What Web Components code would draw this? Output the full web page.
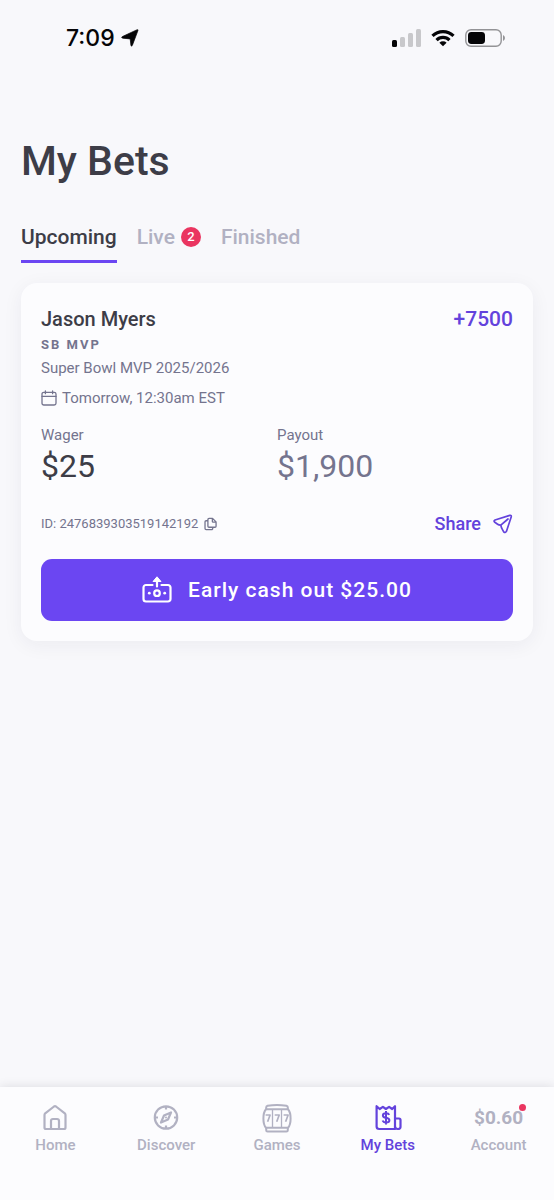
<!DOCTYPE html>
<html lang="en">
<head>
<meta charset="utf-8">
<meta name="viewport" content="width=device-width, initial-scale=1">
<title>My Bets</title>
<style>
  :root {
    --bg: #f8f8fb;
    --surface: #fcfcfe;
    --ink: #3d3d47;
    --muted: #74748e;
    --faint: #b1b1c2;
    --accent: #6b46f2;
    --accent-text: #6342dc;
    --alert: #ea3560;
    --gutter: 21px;
  }
  body {
    margin: 0;
    background: var(--bg);
    color: var(--ink);
    font-family: Roboto, "Liberation Sans", sans-serif;
  }
</style>
</head>
<body>
<bets-app></bets-app>

<script>
  const define = (name, markup, setup) => {
    const template = document.createElement('template');
    template.innerHTML = markup;
    customElements.define(name, class extends HTMLElement {
      constructor() {
        super();
        this.attachShadow({ mode: 'open' }).append(template.content.cloneNode(true));
      }
      connectedCallback() {
        if (setup) setup(this, this.shadowRoot);
      }
    });
  };

  const ICONS = {
    location: ['0 0 20 20', '<path d="M18.8 1.8 12.6 18.2Q11.600 20 11 18L10.200 11 2 10.200Q-.4 9.500 1.600 8.400L17.400 1Q19.400 .2 18.800 1.800Z" fill="currentColor" stroke="currentColor" stroke-width=".8" stroke-linejoin="round"/>'],
    signal: ['0 0 29 18', '<g fill="#c8c8cb"><rect x="8" y="8" width="5" height="10" rx="1.5"/><rect x="16" y="4" width="5" height="14" rx="1.5"/><rect x="24" y="0" width="5" height="18" rx="1.5"/></g><rect y="11" width="5" height="7" rx="1.5" fill="currentColor"/>'],
    wifi: ['0 0 26 18', '<g fill="none" stroke="currentColor" stroke-width="3.4"><path d="M1.6 6.8a16.2 16.2 0 0 1 22.8 0"/><path d="M6 11.3a9.8 9.8 0 0 1 14 0"/></g><path d="M13 18 9.1 14.2a5.5 5.5 0 0 1 7.8 0Z" fill="currentColor"/>'],
    battery: ['0 0 41 18', '<rect x=".8" y=".8" width="35.4" height="16.4" rx="5.2" fill="none" stroke="#939396" stroke-width="1.4"/><rect x="3" y="3" width="17" height="12" rx="3.4" fill="currentColor"/><path d="M38 6q2 .8 2 3t-2 3Z" fill="#939396"/>'],
    calendar: ['0 0 16 16', '<g fill="none" stroke="currentColor" stroke-width="1.3" stroke-linecap="round" stroke-linejoin="round"><rect x="1" y="2.3" width="14" height="12.7" rx="1.8"/><path d="M1 6.4h14M4.4.9v2.8M11.6.9v2.8"/></g>'],
    copy: ['0 0 14 14', '<g fill="none" stroke="currentColor" stroke-width="1.4" stroke-linejoin="round" stroke-linecap="round"><path d="M5.4.9h3.8L13 4.7v4.600a1.200 1.200 0 0 1-1.200 1.200H5.400A1.200 1.200 0 0 1 4.200 9.300V2.100A1.200 1.200 0 0 1 5.400.9ZM9 1v3.200a.8.8 0 0 0 .8.8H13M4 3.500H2.300A1.200 1.200 0 0 0 1.100 4.700v7.200a1.200 1.200 0 0 0 1.200 1.200h5.900a1.200 1.200 0 0 0 1.200-1.200v-1.200"/></g>'],
    share: ['0 0 20 20', '<g fill="none" stroke="currentColor" stroke-width="1.700" stroke-linejoin="round" stroke-linecap="round"><path d="M16.800 1.400 2 6Q.4 6.800 1.500 8L4.600 10.200Q5.600 10.900 7.800 11.200 8.400 13.800 9.200 15.200L10.700 17.800Q12.200 19.200 13.400 17.400L18.200 3Q18.600 1 16.800 1.400ZM7.800 11.200 15 5"/></g>'],
    cashout: ['0 0 30 28', '<g fill="none" stroke="currentColor" stroke-width="2.200" stroke-linejoin="round" stroke-linecap="round"><path d="M10.500 9H4A2.500 2.500 0 0 0 1.500 11.500V23A2.500 2.500 0 0 0 4 25.500h22a2.500 2.500 0 0 0 2.500-2.500V11.500A2.500 2.500 0 0 0 26 9h-6.500M15 10.500V3"/><circle cx="15" cy="17.200" r="2.800"/></g><path d="M15 .8 19 5.500h-8Z" fill="currentColor" stroke="currentColor" stroke-linejoin="round"/><circle cx="7.300" cy="17.200" r="1.400" fill="currentColor"/><circle cx="22.700" cy="17.200" r="1.400" fill="currentColor"/>'],
    home: ['0 0 30 30', '<g fill="none" stroke="currentColor" stroke-width="2.200" stroke-linejoin="round"><path d="M4.500 12Q4.500 11 5.200 10.300L14 3.500Q15 2.800 16 3.500L24.800 10.300Q25.500 11 25.500 12V24.500Q25.500 26 24 26H6Q4.500 26 4.500 24.500Z"/><path d="M11 26V18Q11 16 13 16H17Q19 16 19 18V26"/></g>'],
    discover: ['0 0 30 30', '<g fill="none" stroke="currentColor" stroke-width="2.200" stroke-linejoin="round"><circle cx="15" cy="14.500" r="11.200"/><path d="m20 9.500-3 7-7 3 3-7Z"/><path d="M15 3.500v3M15 22.500v3M4 14.500h3M23 14.500h3"/></g><circle cx="15" cy="14.500" r="1" fill="currentColor"/>'],
    games: ['0 0 30 30', '<g fill="none" stroke="currentColor" stroke-width="2" stroke-linejoin="round"><path d="M4 6.200H26Q28.600 9 28.600 15.500T26 24.800H4Q1.400 22 1.400 15.500T4 6.200Z"/><path d="M4.200 6V4.200Q4.200 3.200 5.600 2.800Q15 1 24.400 2.800Q25.800 3.200 25.800 4.200V6M4.200 25V27.300Q4.200 28.600 5.600 28.600H24.400Q25.800 28.600 25.800 27.300V25"/><path d="M10.500 6.200v18.600M19.500 6.200v18.600" stroke-width="1.300"/><g stroke-width="1.700"><path d="M3.600 12h4.500L5.600 18.800M12.700 12h4.500L14.700 18.800M21.600 12h4.500L23.600 18.800"/></g></g>'],
    bets: ['0 0 30 30', '<g fill="none" stroke="currentColor" stroke-width="2.200" stroke-linejoin="round"><path d="M3.600 3.200 6.700 6l3.200-2.200L12.900 6l3.200-2.200L19.200 6 22 3.200V26H6.200Q3.600 26 3.600 23.500Z"/><path d="M22 15.500H26Q27.500 15.500 27.500 17V24Q27.500 26 24.700 26 22 26 22 23.500"/><path d="M16.200 11.800q-.6-1.600-3.200-1.600-3.100 0-3.100 2.200 0 2 3.100 2.300 3.400.4 3.400 2.500 0 2.200-3.400 2.200-2.700 0-3.400-1.900M13 8v13.600" stroke-width="2"/></g>']
  };

  define('ui-icon', `
    <style>
      :host { display: block; flex: none; }
      svg { display: block; width: 100%; height: 100%; overflow: visible; }
    </style>
    <svg aria-hidden="true"></svg>`, (el, root) => {
      const [box, shapes] = ICONS[el.getAttribute('name')];
      const svg = root.querySelector('svg');
      svg.setAttribute('viewBox', box);
      svg.innerHTML = shapes;
    });

  define('status-bar', `
    <style>
      :host { display: flex; align-items: center; justify-content: space-between;
        height: 28px; padding: 24px 48px 24px 66px; color: #050507; }
      .time, .system { display: flex; align-items: center; }
      .time { gap: 6px; font: 500 23px/28px Inter, "Liberation Sans", sans-serif; }
      .system { gap: 10px; }
      .location { width: 18px; height: 18px; }
      .signal { width: 29px; height: 18px; }
      .wifi { width: 24px; height: 18px; }
      .battery { width: 41px; height: 18px; }
    </style>
    <div class="time"><span>7:09</span><ui-icon class="location" name="location"></ui-icon></div>
    <div class="system">
      <ui-icon class="signal" name="signal"></ui-icon>
      <ui-icon class="wifi" name="wifi"></ui-icon>
      <ui-icon class="battery" name="battery"></ui-icon>
    </div>`);

  define('tab-item', `
    <style>
      :host { display: block; }
      button { display: flex; align-items: center; gap: 6px; padding: 0 0 9px;
        border: 0; border-bottom: 3px solid transparent; background: none;
        color: var(--faint); font: 500 21px/28px Roboto, "Liberation Sans", sans-serif; cursor: pointer; }
      :host([selected]) button { color: var(--ink); border-color: var(--accent); }
      .count { width: 20px; border-radius: 10px; background: var(--alert); color: #fff;
        font-size: 13px; line-height: 20px; text-align: center; }
    </style>
    <button type="button" role="tab"><slot></slot></button>`, (el, root) => {
      const button = root.querySelector('button');
      button.setAttribute('aria-selected', el.hasAttribute('selected'));
      if (el.hasAttribute('count') && !root.querySelector('.count')) {
        const count = document.createElement('span');
        count.className = 'count';
        count.textContent = el.getAttribute('count');
        button.append(count);
      }
    });

  define('bet-amount', `
    <style>
      :host { display: grid; gap: 3px; }
      .label { color: var(--muted); font-size: 15px; line-height: 20px; }
      .value { font-size: 32px; line-height: 36px; }
    </style>
    <span class="label"><slot name="label"></slot></span>
    <span class="value"><slot></slot></span>`);

  define('cash-out-button', `
    <style>
      :host { display: block; }
      button { display: flex; align-items: center; justify-content: center; gap: 16px;
        width: 100%; padding: 16px; border: 0; border-radius: 11px; background: var(--accent);
        color: #fff; font: 500 21px/30px Roboto, "Liberation Sans", sans-serif; letter-spacing: 1px; cursor: pointer; }
      ui-icon { width: 30px; height: 28px; }
    </style>
    <button type="button"><ui-icon name="cashout"></ui-icon><span><slot></slot></span></button>`);

  define('bet-card', `
    <style>
      :host { display: block; padding: 24px 20px 20px; border-radius: 16px;
        background: var(--surface); box-shadow: 0 4px 20px rgba(40, 40, 60, .06); }
      header { display: flex; justify-content: space-between; }
      h2, p { margin: 0; }
      h2 { font-size: 20px; font-weight: 500; line-height: 24px; }
      .odds { color: var(--accent-text); font-size: 21px; font-weight: 500; line-height: 24px; }
      .market { margin-top: 6px; color: var(--muted); font-size: 13px; font-weight: 700; line-height: 16px; letter-spacing: 2px; }
      .event, .when { color: var(--muted); font-size: 15px; line-height: 20px; }
      .event { margin-top: 5px; }
      .when { display: flex; align-items: center; gap: 5px; margin-top: 10px; }
      .when ui-icon { width: 16px; height: 16px; }
      .amounts { display: grid; grid-template-columns: 1fr 1fr; margin-top: 17px; }
      .payout { color: var(--muted); }
      footer { display: flex; align-items: center; justify-content: space-between; margin: 28px 0 23px; }
      button { display: flex; align-items: center; padding: 0; border: 0; background: none;
        font-family: inherit; cursor: pointer; }
      .id { gap: 6px; color: var(--muted); font-size: 13px; line-height: 24px; }
      .id ui-icon { width: 13px; height: 14px; }
      .share { gap: 12px; color: var(--accent-text); font-size: 18px; font-weight: 500; line-height: 24px; }
      .share ui-icon { width: 20px; height: 20px; }
    </style>
    <header><h2><slot name="player"></slot></h2><span class="odds"><slot name="odds"></slot></span></header>
    <p class="market"><slot name="market"></slot></p>
    <p class="event"><slot name="event"></slot></p>
    <p class="when"><ui-icon name="calendar"></ui-icon><slot name="when"></slot></p>
    <div class="amounts">
      <bet-amount><span slot="label">Wager</span><slot name="wager"></slot></bet-amount>
      <bet-amount class="payout"><span slot="label">Payout</span><slot name="payout"></slot></bet-amount>
    </div>
    <footer>
      <button class="id" type="button"><slot name="id"></slot><ui-icon name="copy"></ui-icon></button>
      <button class="share" type="button">Share<ui-icon name="share"></ui-icon></button>
    </footer>
    <cash-out-button><slot name="cashout"></slot></cash-out-button>`);

  define('nav-item', `
    <style>
      :host { display: block; flex: 1 1 0; min-width: 0; }
      a { display: grid; justify-items: center; gap: 2px; color: var(--faint);
        font-size: 15px; font-weight: 500; line-height: 20px; text-decoration: none; }
      :host([current]) a { color: var(--accent-text); }
      .symbol { display: flex; align-items: center; height: 30px; }
      ::slotted(ui-icon) { width: 30px; height: 30px; }
    </style>
    <a href="#"><span class="symbol"><slot name="symbol"></slot></span><slot></slot></a>`, (el, root) => {
      if (el.hasAttribute('current')) root.querySelector('a').setAttribute('aria-current', 'page');
    });

  define('account-balance', `
    <style>
      :host { display: block; position: relative; font-size: 19px; font-weight: 700; line-height: 24px; }
      i { position: absolute; top: -2px; right: -3px; width: 7px; height: 7px; border-radius: 50%; background: var(--alert); }
    </style>
    <slot></slot><i></i>`);

  define('bottom-nav', `
    <style>
      :host { display: block; position: sticky; bottom: 0; background: var(--surface);
        box-shadow: 0 0 10px rgba(40, 40, 60, .14); }
      nav { display: flex; padding: 16px 0 45px; }
    </style>
    <nav aria-label="Main">
      <nav-item><ui-icon slot="symbol" name="home"></ui-icon>Home</nav-item>
      <nav-item><ui-icon slot="symbol" name="discover"></ui-icon>Discover</nav-item>
      <nav-item><ui-icon slot="symbol" name="games"></ui-icon>Games</nav-item>
      <nav-item current><ui-icon slot="symbol" name="bets"></ui-icon>My Bets</nav-item>
      <nav-item><account-balance slot="symbol">$0.60</account-balance>Account</nav-item>
    </nav>`);

  define('bets-app', `
    <style>
      :host { display: flex; flex-direction: column; min-height: 100vh; }
      main { flex: 1; padding: 61px var(--gutter) 24px; }
      h1 { margin: 0; font-size: 41px; font-weight: 500; line-height: 48px; }
      .tabs { display: flex; gap: 20px; margin: 38px 0 20px; }
    </style>
    <status-bar></status-bar>
    <main>
      <h1>My Bets</h1>
      <div class="tabs" role="tablist">
        <tab-item selected>Upcoming</tab-item>
        <tab-item count="2">Live</tab-item>
        <tab-item>Finished</tab-item>
      </div>
      <bet-card>
        <span slot="player">Jason Myers</span>
        <span slot="odds">+7500</span>
        <span slot="market">SB MVP</span>
        <span slot="event">Super Bowl MVP 2025/2026</span>
        <span slot="when">Tomorrow, 12:30am EST</span>
        <span slot="wager">$25</span>
        <span slot="payout">$1,900</span>
        <span slot="id">ID: 2476839303519142192</span>
        <span slot="cashout">Early cash out $25.00</span>
      </bet-card>
    </main>
    <bottom-nav></bottom-nav>`);
</script>
</body>
</html>
